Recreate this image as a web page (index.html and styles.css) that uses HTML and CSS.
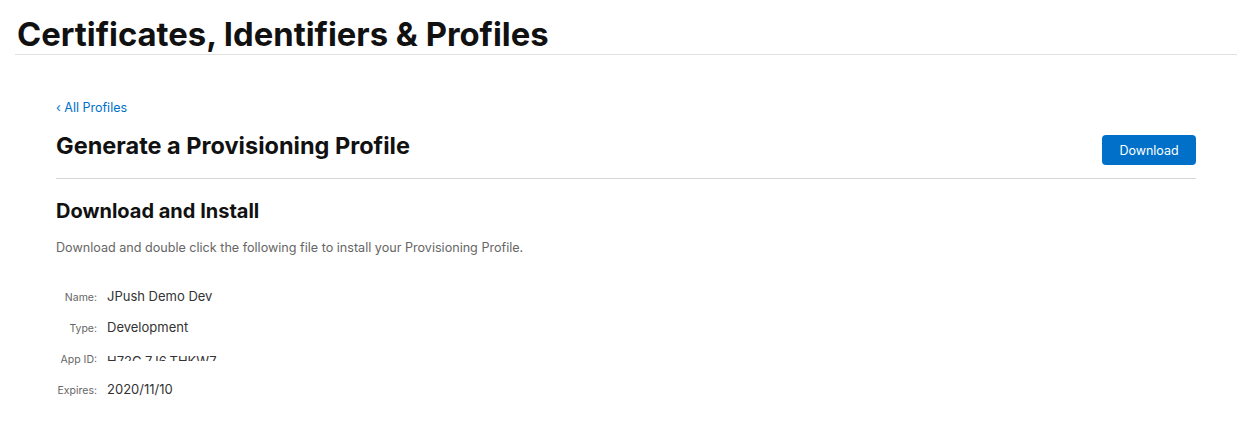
FILE: index.html
```html
<!DOCTYPE html>
<html>
<head>
<meta charset="utf-8">
<link rel="stylesheet" href="styles.css">
</head>
<body>
<header class="top">
  <h1 class="top-title">Certificates, Identifiers &amp; Profiles</h1>
</header>
<main class="content">
  <a class="back" href="#">&lsaquo; All Profiles</a>
  <div class="title-row">
    <h2 class="page-title">Generate a Provisioning Profile</h2>
    <button class="btn">Download</button>
  </div>
  <section class="section">
    <h3 class="section-title">Download and Install</h3>
    <p class="desc">Download and double click the following file to install your Provisioning Profile.</p>
    <dl class="details">
      <div class="row"><dt>Name:</dt><dd>JPush Demo Dev</dd></div>
      <div class="row"><dt>Type:</dt><dd>Development</dd></div>
      <div class="row"><dt>App ID:</dt><dd><span class="redacted">H72C 7J6.THKW7</span></dd></div>
      <div class="row"><dt>Expires:</dt><dd>2020/11/10</dd></div>
    </dl>
  </section>
</main>
</body>
</html>
```
FILE: styles.css
```css
* { box-sizing: border-box; }
body {
  margin: 0;
  font-family: Inter, "Noto Sans", sans-serif;
  color: #111;
  background: #fff;
}
.top {
  margin: 0 16px 0 15px;
  padding-top: 14px;
  border-bottom: 1px solid #e0e0e0;
}
.top-title {
  margin: 0 0 0 2px;
  font-size: 32.8px;
  font-weight: 700;
  line-height: 40px;
}
.content {
  margin: 0 57px 0 56px;
  padding-top: 45px;
}
.back {
  display: block;
  font-size: 12.5px;
  line-height: 16px;
  color: #0070c9;
  text-decoration: none;
}
.title-row {
  display: flex;
  justify-content: space-between;
  align-items: flex-start;
  margin-top: 15px;
  padding-bottom: 13px;
  border-bottom: 1px solid #d6d6d6;
}
.page-title {
  margin: 0;
  font-size: 23.5px;
  font-weight: 700;
  line-height: 30px;
}
.btn {
  margin-top: 4px;
  width: 94px;
  height: 30px;
  border: 0;
  border-radius: 4px;
  background: #0070c9;
  color: #fff;
  font-family: inherit;
  font-size: 12.5px;
}
.section-title {
  margin: 19px 0 0;
  font-size: 20px;
  font-weight: 700;
  line-height: 26px;
}
.desc {
  margin: 16px 0 0;
  font-size: 12.6px;
  line-height: 16px;
  color: #666;
}
.details {
  margin: 32px 0 0;
  display: flex;
  flex-direction: column;
  gap: 15px;
}
.row {
  display: flex;
  align-items: baseline;
  height: 16px;
}
.row dt {
  width: 41px;
  text-align: right;
  font-size: 10.5px;
  color: #666;
}
.row dd {
  margin: 0 0 0 10px;
  font-size: 13px;
  color: #333;
}
.redacted {
  display: inline-block;
  height: 8px;
  overflow: hidden;
  vertical-align: 2px;
  line-height: 16px;
}
```
